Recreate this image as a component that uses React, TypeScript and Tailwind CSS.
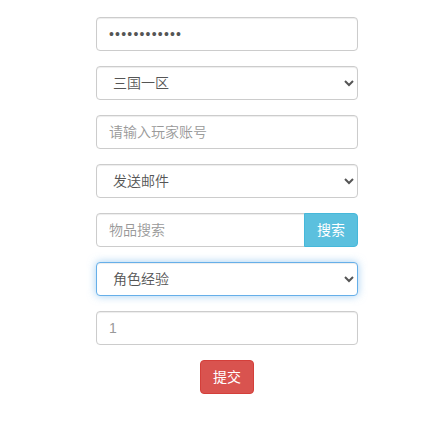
import React from 'react';

const font = { fontFamily: '"Liberation Sans", "Noto Sans CJK SC", sans-serif' };

const inputCls =
  'block w-full h-[34px] px-3 text-[14px] font-[350] text-[#555] bg-white border border-[#ccc] rounded-[4px] shadow-[inset_0_1px_1px_rgba(0,0,0,0.075)] outline-none placeholder:text-[#999]';

const selectCls =
  'block w-full h-[34px] px-3 text-[14px] font-[350] text-[#555] bg-white border border-[#ccc] rounded-[4px] shadow-[inset_0_1px_1px_rgba(0,0,0,0.075)] outline-none';

export default function App() {
  return (
    <div className="min-h-screen bg-white pt-[17px]" style={font}>
      <form className="ml-[96px] w-[262px] flex flex-col gap-[15px]" onSubmit={(e) => e.preventDefault()}>
        <input type="password" defaultValue="123456789012" className={inputCls + ' tracking-[1.2px]'} />

        <select defaultValue="1" className={selectCls}>
          <option value="1">三国一区</option>
          <option value="2">三国二区</option>
        </select>

        <input type="text" placeholder="请输入玩家账号" className={inputCls} />

        <select defaultValue="mail" className={selectCls}>
          <option value="mail">发送邮件</option>
          <option value="item">发送物品</option>
        </select>

        <div className="flex">
          <input
            type="text"
            placeholder="物品搜索"
            className="flex-1 min-w-0 h-[34px] px-3 text-[14px] font-[350] text-[#555] bg-white border border-[#ccc] rounded-l-[4px] shadow-[inset_0_1px_1px_rgba(0,0,0,0.075)] outline-none placeholder:text-[#999]"
          />
          <button
            type="button"
            className="h-[34px] w-[54px] -ml-px text-[14px] font-normal text-white bg-[#5bc0de] border border-[#46b8da] rounded-r-[4px]"
          >
            搜索
          </button>
        </div>

        <select
          defaultValue="exp"
          className="block w-full h-[34px] px-3 text-[14px] font-[350] text-[#555] bg-white border border-[#66afe9] rounded-[4px] shadow-[inset_0_1px_1px_rgba(0,0,0,0.075),0_0_8px_rgba(102,175,233,0.6)] outline-none"
        >
          <option value="exp">角色经验</option>
          <option value="gold">角色金币</option>
        </select>

        <input type="text" placeholder="1" className={inputCls} />

        <div className="flex justify-center">
          <button
            type="submit"
            className="h-[34px] w-[54px] text-[14px] font-normal text-white bg-[#d9534f] border border-[#d43f3a] rounded-[4px]"
          >
            提交
          </button>
        </div>
      </form>
    </div>
  );
}
